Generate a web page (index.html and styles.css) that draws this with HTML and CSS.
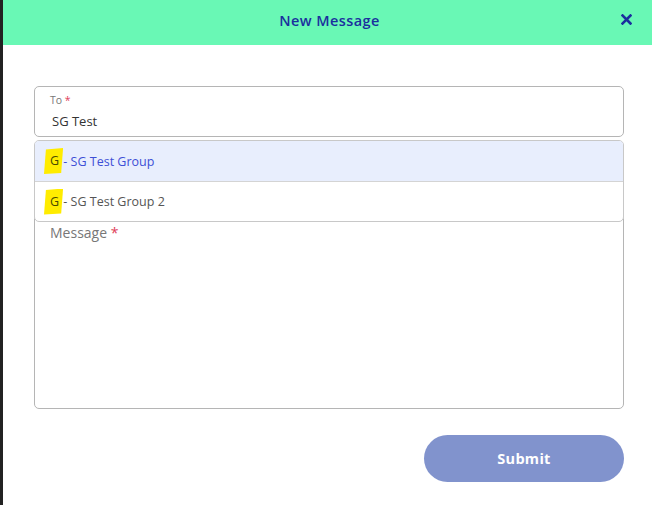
FILE: index.html
```html
<!DOCTYPE html>
<html lang="en">
<head>
    <meta charset="UTF-8">
    <meta name="viewport" content="width=device-width, initial-scale=1.0">
    <title>New Message</title>
    <link rel="stylesheet" href="styles.css">
</head>
<body>
    <div class="page">
        <div class="sidebar-edge"></div>
        <div class="modal">
            <div class="modal-header">
                <h2>New Message</h2>
                <button class="close-btn" aria-label="Close">
                    <svg width="11" height="11" viewBox="0 0 11 11">
                        <path d="M1.5 1.5 L9.5 9.5 M9.5 1.5 L1.5 9.5" stroke="#1b2f9e" stroke-width="2.6" stroke-linecap="square"/>
                    </svg>
                </button>
            </div>

            <div class="modal-body">
                <div class="field-wrap">
                    <div class="field">
                        <label>To <span class="req">*</span></label>
                        <div class="field-value">SG Test</div>
                    </div>

                    <!-- suggestions list sits over the message box -->
                    <ul class="suggestions">
                        <li class="active"><mark>G</mark> - SG Test Group</li>
                        <li><mark>G</mark> - SG Test Group 2</li>
                    </ul>
                </div>

                <div class="message-box">
                    <span class="placeholder">Message <span class="req">*</span></span>
                </div>

                <div class="actions">
                    <button class="submit-btn">Submit</button>
                </div>
            </div>
        </div>
    </div>
</body>
</html>
```

FILE: styles.css
```css
* {
    margin: 0;
    padding: 0;
    box-sizing: border-box;
    font-family: 'Open Sans', 'Noto Sans', sans-serif;
}

body {
    background: #fff;
}

.page {
    display: flex;
    height: 505px;
}

.sidebar-edge {
    width: 3px;
    background: #222;
}

.modal {
    flex: 1;
    background: #fff;
}

.modal-header {
    height: 45px;
    background: #69f8b5;
    display: flex;
    align-items: center;
    justify-content: center;
    position: relative;
    padding-bottom: 4px;
}

.modal-header h2 {
    font-size: 14.5px;
    font-weight: 600;
    color: #1b2f9e;
    letter-spacing: 0.4px;
    margin-left: 4px;
}

.close-btn {
    position: absolute;
    right: 20px;
    top: 14px;
    border: none;
    background: none;
    width: 11px;
    height: 11px;
    cursor: pointer;
}

.close-btn svg {
    display: block;
}

.modal-body {
    padding: 41px 28px 0 31px;
}

.field-wrap {
    position: relative;
}

.field {
    height: 51px;
    border: 1px solid #b5b5b5;
    border-radius: 5px;
    padding: 6px 15px 0 15px;
}

.field label {
    display: block;
    font-size: 10.5px;
    color: #777;
    line-height: 15px;
}

.req {
    color: #e0405a;
}

.field-value {
    font-size: 13px;
    color: #333;
    line-height: 22px;
    margin: 2px 0 0 2px;
}

.suggestions {
    list-style: none;
    position: absolute;
    top: 54px;
    left: 0;
    right: 0;
    z-index: 2;
    background: #fff;
    border: 1px solid #c8c8c8;
    border-radius: 5px;
    overflow: hidden;
}

.suggestions li {
    height: 40px;
    display: flex;
    align-items: center;
    padding-left: 9px;
    font-size: 12.5px;
    color: #555;
    white-space: pre;
}

.suggestions li + li {
    border-top: 1px solid #d4d4d4;
}

.suggestions li.active {
    background: #e8eefd;
    color: #3d4fd6;
}

.suggestions mark {
    background: #ffec00;
    color: #4a4a00;
    padding: 4px 4px 5px 6px;
    margin-right: -3px;
    clip-path: polygon(10% 6%, 100% 0, 90% 96%, 0 100%);
}

.message-box {
    margin-top: 77px;
    height: 195px;
    border: 1px solid #b5b5b5;
    border-radius: 5px;
    padding: 6px 15px;
}

.placeholder {
    font-size: 14px;
    color: #777;
    line-height: 20px;
}

.actions {
    display: flex;
    justify-content: flex-end;
    margin-top: 26px;
}

.submit-btn {
    width: 200px;
    height: 47px;
    border: none;
    border-radius: 24px;
    background: #8193cd;
    color: #fff;
    font-size: 14.5px;
    font-weight: 700;
    letter-spacing: 0.3px;
    cursor: pointer;
}
```
